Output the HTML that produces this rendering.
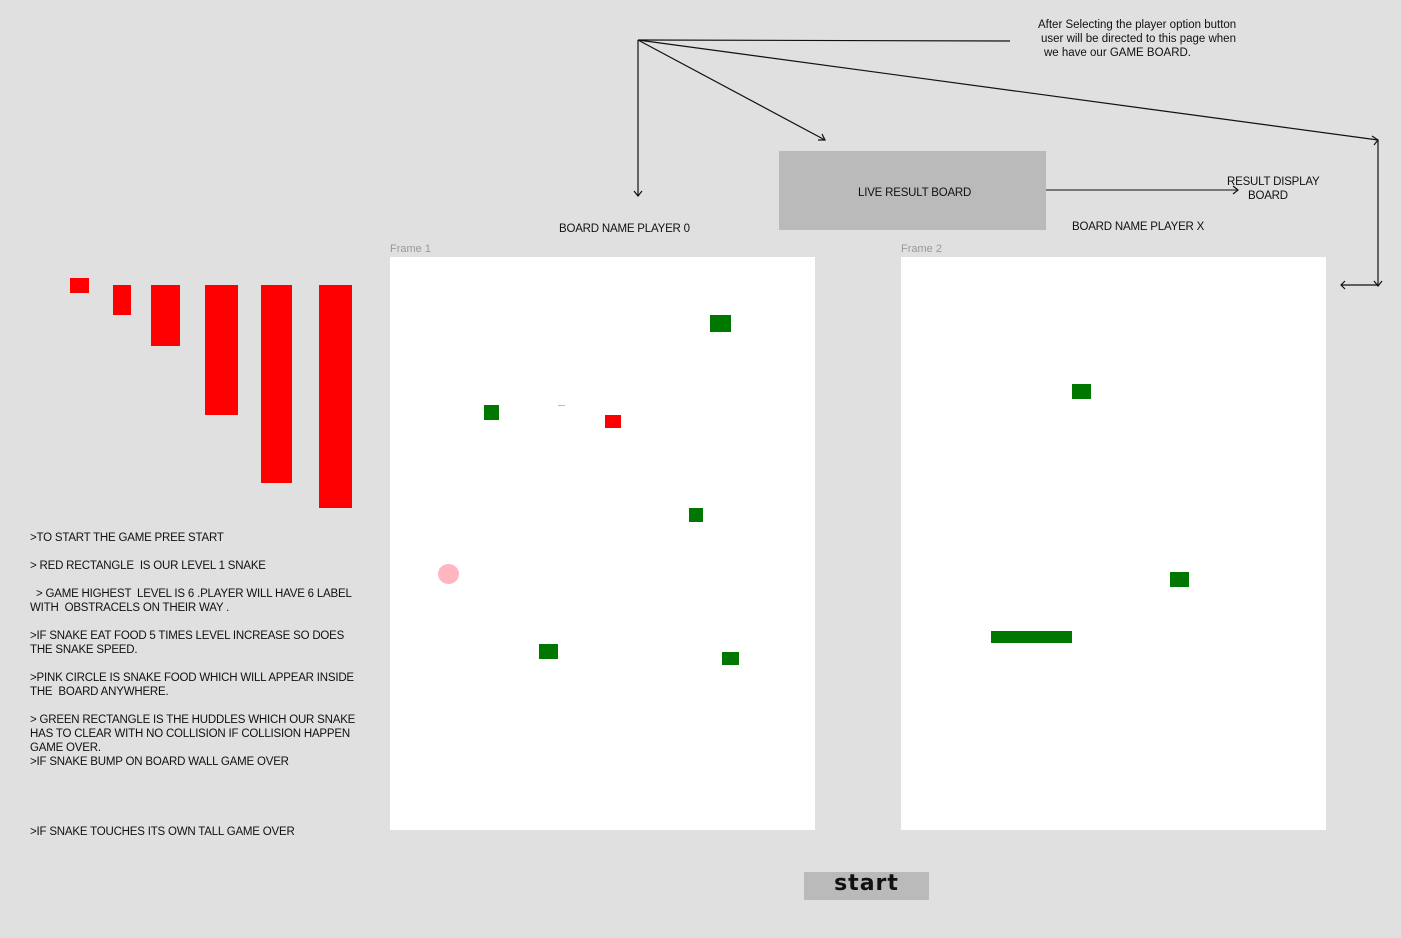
<!DOCTYPE html>
<html><head><meta charset="utf-8"><style>
body{margin:0;width:1401px;height:938px;background:#e0e0e0;position:relative;overflow:hidden;font-family:"Liberation Sans",sans-serif;color:#111}
.a{position:absolute}
.t{position:absolute;font-size:11.5px;white-space:pre;letter-spacing:-0.2px;line-height:14px}
.r{position:absolute;background:#ff0000}
.g{position:absolute;background:#007700}
.f{position:absolute;background:#fff}
.fl{position:absolute;font-size:11px;color:#999}
</style></head><body>
<svg class="a" style="left:0;top:0" width="1401" height="938">
<g stroke="#111" stroke-width="1.2" fill="none">
<line x1="638" y1="40" x2="1010" y2="41"/>
<line x1="638" y1="40" x2="638" y2="195"/>
<polyline points="634,191 638,196 642,191"/>
<line x1="638" y1="40" x2="825" y2="140"/>
<polyline points="818,140 825,140 822,134"/>
<line x1="638" y1="40" x2="1378" y2="140"/>
<polyline points="1372,136 1378,140 1374,145"/>
<line x1="1378" y1="140" x2="1378" y2="285"/>
<polyline points="1374,281 1378,286 1382,281"/>
<line x1="1341" y1="285" x2="1378" y2="285"/>
<polyline points="1345,281 1341,285 1345,289"/>
<line x1="1046" y1="190" x2="1238" y2="190" stroke="#555" stroke-width="1.5"/>
<polyline points="1233,186 1238,190 1233,194"/>
</g>
</svg>
<div class="t" style="left:1038px;top:18px;letter-spacing:0">After Selecting the player option button</div>
<div class="t" style="left:1041px;top:32px;letter-spacing:0">user will be directed to this page when</div>
<div class="t" style="left:1044px;top:46px;letter-spacing:0">we have our GAME BOARD.</div>
<div class="a" style="left:779px;top:151px;width:267px;height:79px;background:#bababa"></div>
<div class="t" style="left:858px;top:186px">LIVE RESULT BOARD</div>
<div class="t" style="left:1227px;top:175px">RESULT DISPLAY</div>
<div class="t" style="left:1248px;top:189px">BOARD</div>
<div class="t" style="left:559px;top:222px">BOARD NAME PLAYER 0</div>
<div class="t" style="left:1072px;top:220px">BOARD NAME PLAYER X</div>
<div class="fl" style="left:390px;top:243px">Frame 1</div>
<div class="fl" style="left:901px;top:243px">Frame 2</div>
<div class="f" style="left:390px;top:257px;width:425px;height:573px"></div>
<div class="f" style="left:901px;top:257px;width:425px;height:573px"></div>
<div class="r" style="left:70px;top:278px;width:19px;height:15px"></div>
<div class="r" style="left:113px;top:285px;width:18px;height:30px"></div>
<div class="r" style="left:151px;top:285px;width:29px;height:61px"></div>
<div class="r" style="left:205px;top:285px;width:33px;height:130px"></div>
<div class="r" style="left:261px;top:285px;width:31px;height:198px"></div>
<div class="r" style="left:319px;top:285px;width:33px;height:223px"></div>
<div class="g" style="left:710px;top:315px;width:21px;height:17px"></div>
<div class="g" style="left:484px;top:405px;width:15px;height:15px"></div>
<div class="a" style="left:558px;top:405px;width:7px;height:1px;background:#bbb"></div>
<div class="r" style="left:605px;top:415px;width:16px;height:13px"></div>
<div class="g" style="left:689px;top:508px;width:14px;height:14px"></div>
<div class="a" style="left:438px;top:564px;width:21px;height:20px;border-radius:50%;background:#ffb6c1"></div>
<div class="g" style="left:539px;top:644px;width:19px;height:15px"></div>
<div class="g" style="left:722px;top:652px;width:17px;height:13px"></div>
<div class="g" style="left:1072px;top:384px;width:19px;height:15px"></div>
<div class="g" style="left:1170px;top:572px;width:19px;height:15px"></div>
<div class="g" style="left:991px;top:631px;width:81px;height:12px"></div>
<div class="t" style="left:30px;top:531px">&gt;TO START THE GAME PREE START</div>
<div class="t" style="left:30px;top:559px">&gt; RED RECTANGLE  IS OUR LEVEL 1 SNAKE</div>
<div class="t" style="left:30px;top:587px">  &gt; GAME HIGHEST  LEVEL IS 6 .PLAYER WILL HAVE 6 LABEL
WITH  OBSTRACELS ON THEIR WAY .</div>
<div class="t" style="left:30px;top:629px">&gt;IF SNAKE EAT FOOD 5 TIMES LEVEL INCREASE SO DOES
THE SNAKE SPEED.</div>
<div class="t" style="left:30px;top:671px">&gt;PINK CIRCLE IS SNAKE FOOD WHICH WILL APPEAR INSIDE
THE  BOARD ANYWHERE.</div>
<div class="t" style="left:30px;top:713px">&gt; GREEN RECTANGLE IS THE HUDDLES WHICH OUR SNAKE
HAS TO CLEAR WITH NO COLLISION IF COLLISION HAPPEN
GAME OVER.
&gt;IF SNAKE BUMP ON BOARD WALL GAME OVER</div>
<div class="t" style="left:30px;top:825px">&gt;IF SNAKE TOUCHES ITS OWN TALL GAME OVER</div>
<div class="a" style="left:804px;top:872px;width:125px;height:28px;background:#bababa;text-align:center;font:bold 22px/24px 'DejaVu Sans',sans-serif;color:#111;letter-spacing:1px">start</div>
</body></html>
